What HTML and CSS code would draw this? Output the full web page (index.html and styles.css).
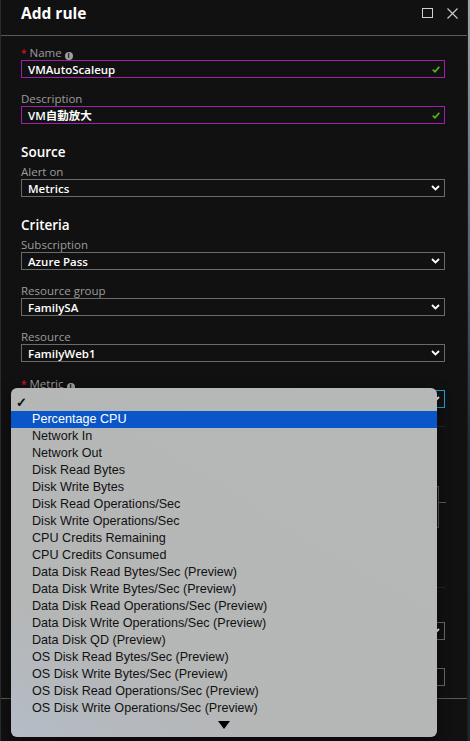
FILE: index.html
```html
<!DOCTYPE html>
<html lang="en">
<head>
    <meta charset="UTF-8">
    <meta name="viewport" content="width=device-width, initial-scale=1.0">
    <title>Add rule</title>
    <link rel="stylesheet" href="styles.css">
</head>
<body>
    <div class="blade">
        <div class="blade-header">
            <h1>Add rule</h1>
            <div class="header-icons">
                <svg width="11" height="10" viewBox="0 0 11 10"><rect x="0.5" y="0.5" width="10" height="9" fill="none" stroke="#cfcfcf" stroke-width="1"/></svg>
                <svg width="11" height="11" viewBox="0 0 11 11"><path d="M0.5 0.5 L10.5 10.5 M10.5 0.5 L0.5 10.5" stroke="#cfcfcf" stroke-width="1.1"/></svg>
            </div>
        </div>

        <div class="blade-content">
            <div class="field">
                <label><span class="req">*</span> Name <span class="info">i</span></label>
                <div class="input valid">
                    <span>VMAutoScaleup</span>
                    <svg width="8" height="7" viewBox="0 0 8 7"><path d="M0.8 3.6 L3 5.8 L7.3 0.8" fill="none" stroke="#5cb81c" stroke-width="1.6"/></svg>
                </div>
            </div>
            <div class="field">
                <label>Description</label>
                <div class="input valid">
                    <span>VM自動放大</span>
                    <svg width="8" height="7" viewBox="0 0 8 7"><path d="M0.8 3.6 L3 5.8 L7.3 0.8" fill="none" stroke="#5cb81c" stroke-width="1.6"/></svg>
                </div>
            </div>

            <h2>Source</h2>
            <div class="field">
                <label>Alert on</label>
                <div class="input select">
                    <span>Metrics</span>
                    <svg width="9" height="6" viewBox="0 0 9 6"><path d="M1 1 L4.5 4.5 L8 1" fill="none" stroke="#fff" stroke-width="1.8"/></svg>
                </div>
            </div>

            <h2>Criteria</h2>
            <div class="field">
                <label>Subscription</label>
                <div class="input select">
                    <span>Azure Pass</span>
                    <svg width="9" height="6" viewBox="0 0 9 6"><path d="M1 1 L4.5 4.5 L8 1" fill="none" stroke="#fff" stroke-width="1.8"/></svg>
                </div>
            </div>
            <div class="field">
                <label>Resource group</label>
                <div class="input select">
                    <span>FamilySA</span>
                    <svg width="9" height="6" viewBox="0 0 9 6"><path d="M1 1 L4.5 4.5 L8 1" fill="none" stroke="#fff" stroke-width="1.8"/></svg>
                </div>
            </div>
            <div class="field">
                <label>Resource</label>
                <div class="input select">
                    <span>FamilyWeb1</span>
                    <svg width="9" height="6" viewBox="0 0 9 6"><path d="M1 1 L4.5 4.5 L8 1" fill="none" stroke="#fff" stroke-width="1.8"/></svg>
                </div>
            </div>
            <div class="field">
                <label class="metric-label"><span class="req">*</span> Metric <span class="info">i</span></label>
                <div class="input select focused">
                    <span></span>
                    <svg width="9" height="6" viewBox="0 0 9 6"><path d="M1 1 L4.5 4.5 L8 1" fill="none" stroke="#fff" stroke-width="1.8"/></svg>
                </div>
            </div>

            <!-- metric chart, hidden under the list -->
            <div class="chart">
                <div class="chart-box"></div>
            </div>

            <div class="field">
                <label></label>
                <div class="input select">
                    <span></span>
                    <svg width="9" height="6" viewBox="0 0 9 6"><path d="M1 1 L4.5 4.5 L8 1" fill="none" stroke="#fff" stroke-width="1.8"/></svg>
                </div>
            </div>
            <div class="field">
                <label></label>
                <div class="input"></div>
            </div>
        </div>

        <div class="blade-footer"></div>
    </div>

    <!-- open metric list -->
    <div class="popup">
        <div class="popup-row check">✓</div>
        <div class="popup-row selected">Percentage CPU</div>
        <div class="popup-row">Network In</div>
        <div class="popup-row">Network Out</div>
        <div class="popup-row">Disk Read Bytes</div>
        <div class="popup-row">Disk Write Bytes</div>
        <div class="popup-row">Disk Read Operations/Sec</div>
        <div class="popup-row">Disk Write Operations/Sec</div>
        <div class="popup-row">CPU Credits Remaining</div>
        <div class="popup-row">CPU Credits Consumed</div>
        <div class="popup-row">Data Disk Read Bytes/Sec (Preview)</div>
        <div class="popup-row">Data Disk Write Bytes/Sec (Preview)</div>
        <div class="popup-row">Data Disk Read Operations/Sec (Preview)</div>
        <div class="popup-row">Data Disk Write Operations/Sec (Preview)</div>
        <div class="popup-row">Data Disk QD (Preview)</div>
        <div class="popup-row">OS Disk Read Bytes/Sec (Preview)</div>
        <div class="popup-row">OS Disk Write Bytes/Sec (Preview)</div>
        <div class="popup-row">OS Disk Read Operations/Sec (Preview)</div>
        <div class="popup-row">OS Disk Write Operations/Sec (Preview)</div>
        <div class="popup-more">
            <svg width="12" height="8" viewBox="0 0 12 8"><path d="M0 0 L12 0 L6 8 Z" fill="#000"/></svg>
        </div>
    </div>
</body>
</html>
```

FILE: styles.css
```css
html, body {
    margin: 0;
    padding: 0;
}
body {
    width: 470px;
    height: 741px;
    overflow: hidden;
    background: #111;
    font-family: "Open Sans", "Noto Sans CJK TC", sans-serif;
    position: relative;
}
.blade {
    height: 741px;
    margin-right: 2px;
    border-left: 1px solid #2c2c2c;
    border-right: 1px solid #1c1c1c;
    display: flex;
    flex-direction: column;
    box-sizing: border-box;
}
body::after {
    content: "";
    position: absolute;
    top: 0;
    right: 0;
    width: 2px;
    height: 741px;
    background: linear-gradient(#9ba5ae, #5d6b77 30%, #1f2c36 60%, #1a2630);
}
.blade-header {
    height: 35px;
    border-bottom: 1px solid #5a5a5a;
    display: flex;
    align-items: center;
    justify-content: space-between;
    padding: 0 9px 0 20px;
    flex-shrink: 0;
}
h1 {
    margin: 0;
    margin-top: -9px;
    color: #fff;
    font-size: 15.5px;
    font-weight: 700;
}
.header-icons {
    display: flex;
    gap: 14px;
    align-items: center;
    margin-top: -9px;
}
.blade-content {
    flex: 1;
    padding: 10px 22px 0 20px;
    overflow: hidden;
}
.field {
    margin-bottom: 14px;
}
label {
    display: block;
    height: 14px;
    line-height: 14px;
    font-size: 11.5px;
    color: #9c9c9c;
}
.metric-label {
    line-height: 16px;
}
.req {
    color: #e81123;
    font-size: 10px;
}
.info {
    display: inline-block;
    width: 8px;
    height: 8px;
    border-radius: 50%;
    background: #a0a0a0;
    color: #111;
    font-size: 7px;
    font-weight: 700;
    line-height: 8px;
    text-align: center;
    vertical-align: -1px;
}
.input {
    height: 18px;
    box-sizing: border-box;
    border: 1px solid #6a6a6a;
    display: flex;
    align-items: center;
    justify-content: space-between;
    padding: 0 4px 0 6px;
    color: #fff;
    font-size: 11.5px;
    font-weight: 600;
}
.input.valid {
    border-color: #a21caf;
}
.input.focused {
    border-color: #1aa3e0;
}
h2 {
    margin: 20px 0 5px;
    height: 16px;
    line-height: 16px;
    color: #fff;
    font-size: 13.5px;
    font-weight: 600;
}
.chart {
    height: 160px;
    margin-top: 18px;
    margin-bottom: 20px;
    border-top: 1px solid #262626;
    border-bottom: 1px solid #262626;
}
.chart-box {
    margin: 59px 6px 0 auto;
    width: 80px;
    height: 40px;
    border: 1px solid #5a5a5a;
    position: relative;
}
.chart-box::after {
    content: "";
    position: absolute;
    right: -8px;
    top: 15px;
    width: 7px;
    border-top: 1px solid #5a5a5a;
}
.blade-footer {
    height: 42px;
    border-top: 1px solid #5a5a5a;
    flex-shrink: 0;
}

/* dropdown list */
.popup {
    position: absolute;
    left: 11px;
    top: 388px;
    width: 426px;
    height: 349px;
    box-sizing: border-box;
    padding-top: 6px;
    border-radius: 6px;
    background: linear-gradient(30deg, #b4bcc6 0%, #b5b6b6 25%, #b6b7b7 100%);
    box-shadow: 0 4px 14px rgba(0, 0, 0, 0.5);
    font-family: "Liberation Sans", Arial, sans-serif;
    font-size: 12.6px;
    color: #111;
}
.popup-row {
    height: 17px;
    line-height: 17px;
    padding-left: 21px;
    white-space: nowrap;
}
.popup-row.check {
    padding-left: 5px;
    font-size: 13px;
    font-weight: 700;
}
.popup-row.selected {
    background: #0a56c9;
    color: #fff;
}
.popup-more {
    display: flex;
    justify-content: center;
    padding-top: 4px;
}
```
